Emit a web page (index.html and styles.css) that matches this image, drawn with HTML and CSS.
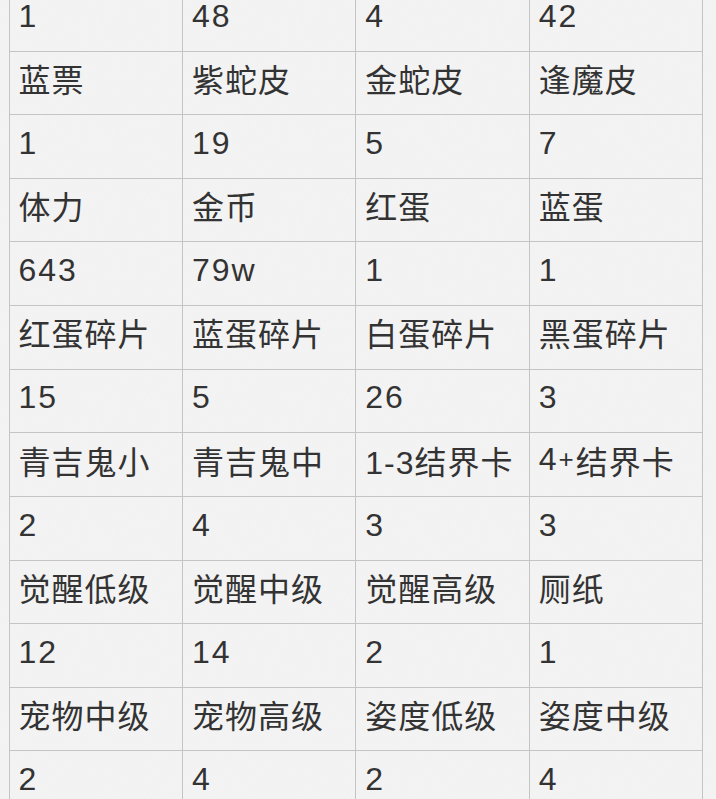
FILE: index.html
```html
<!DOCTYPE html>
<html lang="zh-CN">
<head>
<meta charset="utf-8">
<title>材料统计</title>
<link rel="stylesheet" href="styles.css">
</head>
<body>
<div class="sheet">
  <div class="cell num">1</div><div class="cell num">48</div><div class="cell num">4</div><div class="cell num">42</div>
  <div class="cell">蓝票</div><div class="cell">紫蛇皮</div><div class="cell">金蛇皮</div><div class="cell">逢魔皮</div>
  <div class="cell num">1</div><div class="cell num">19</div><div class="cell num">5</div><div class="cell num">7</div>
  <div class="cell">体力</div><div class="cell">金币</div><div class="cell">红蛋</div><div class="cell">蓝蛋</div>
  <div class="cell num">643</div><div class="cell num">79w</div><div class="cell num">1</div><div class="cell num">1</div>
  <div class="cell">红蛋碎片</div><div class="cell">蓝蛋碎片</div><div class="cell">白蛋碎片</div><div class="cell">黑蛋碎片</div>
  <div class="cell num">15</div><div class="cell num">5</div><div class="cell num">26</div><div class="cell num">3</div>
  <div class="cell">青吉鬼小</div><div class="cell">青吉鬼中</div><div class="cell">1-3结界卡</div><div class="cell">4<span class="plus">+</span>结界卡</div>
  <div class="cell num">2</div><div class="cell num">4</div><div class="cell num">3</div><div class="cell num">3</div>
  <div class="cell">觉醒低级</div><div class="cell">觉醒中级</div><div class="cell">觉醒高级</div><div class="cell">厕纸</div>
  <div class="cell num">12</div><div class="cell num">14</div><div class="cell num">2</div><div class="cell num">1</div>
  <div class="cell">宠物中级</div><div class="cell">宠物高级</div><div class="cell">姿度低级</div><div class="cell">姿度中级</div>
  <div class="cell num">2</div><div class="cell num">4</div><div class="cell num">2</div><div class="cell num">4</div>
</div>
</body>
</html>
```
FILE: styles.css
```css
html, body {
  margin: 0;
  padding: 0;
  height: 100%;
  overflow: hidden;
}
body {
  background-color: #f4f4f4;
  background-image: url("data:image/svg+xml;utf8,<svg xmlns='http://www.w3.org/2000/svg' width='200' height='200'><filter id='n'><feTurbulence type='fractalNoise' baseFrequency='0.9' numOctaves='2' stitchTiles='stitch'/><feColorMatrix values='0 0 0 0 0.5  0 0 0 0 0.5  0 0 0 0 0.5  0 0 0 0.04 0'/></filter><rect width='200' height='200' filter='url(%23n)'/></svg>");
  font-family: "Liberation Sans", "Noto Sans CJK SC", sans-serif;
  color: #333333;
}
.sheet {
  display: grid;
  grid-template-columns: repeat(4, 173.4px);
  grid-auto-rows: 63.64px;
  margin: -12.1px 0 0 8.5px;
  border-left: 1px solid #c4c4c4;
  width: max-content;
}
.cell {
  box-sizing: border-box;
  border-right: 1px solid #c4c4c4;
  border-bottom: 1px solid #c4c4c4;
  display: flex;
  align-items: center;
  padding: 0 0 10px 9px;
  font-size: 32px;
  letter-spacing: 1px;
  white-space: nowrap;
}
.num {
  padding-bottom: 6px;
  letter-spacing: 2px;
}
.plus {
  font-size: 26px;
  margin: 0 2px 0 1px;
  letter-spacing: 0;
}
```
